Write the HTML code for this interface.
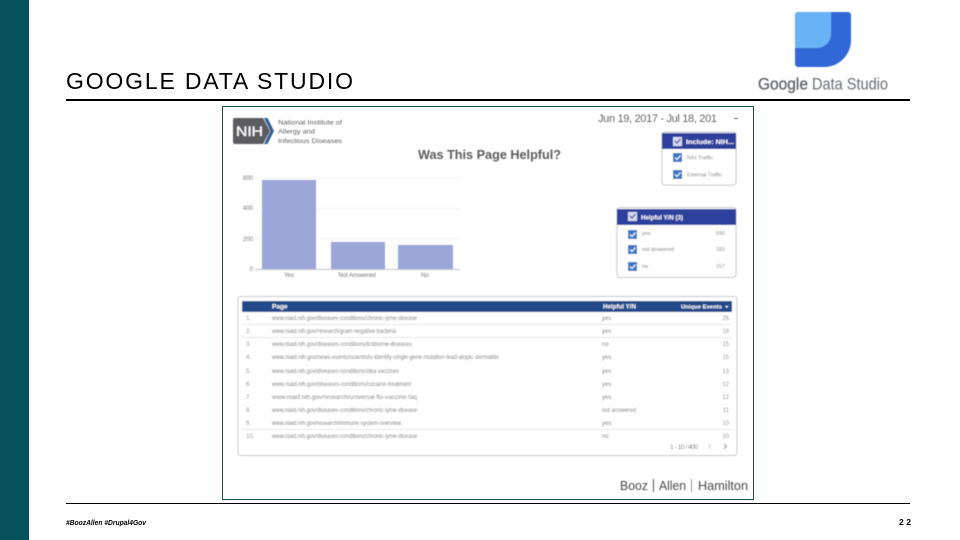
<!DOCTYPE html>
<html lang="en">
<head>
<meta charset="utf-8">
<title>Google Data Studio</title>
<style>
html,body{margin:0;padding:0;background:#fff;width:960px;height:540px;overflow:hidden}
svg{display:block}
text{font-family:"Liberation Sans",sans-serif}
.s{filter:url(#b)}
.r{font-size:6px;fill:#777}
.n{font-size:6px;fill:#888}
.w{fill:#fff;font-weight:bold}
</style>
</head>
<body>
<svg width="960" height="540" viewBox="0 0 960 540" xmlns="http://www.w3.org/2000/svg">
<defs>
<filter id="b" x="-5%" y="-5%" width="110%" height="110%"><feGaussianBlur stdDeviation="0.45"/></filter>
</defs>
<rect x="0" y="0" width="29" height="540" fill="#06525a"/>
<text x="66" y="89" font-size="23" fill="#000" textLength="287" lengthAdjust="spacing">GOOGLE DATA STUDIO</text>
<rect x="66" y="99" width="844" height="2" fill="#000"/>
<rect x="66" y="503" width="844" height="1" fill="#000"/>
<text x="66" y="525" font-size="7.5" font-weight="bold" font-style="italic" fill="#000" textLength="80" lengthAdjust="spacingAndGlyphs">#BoozAllen #Drupal4Gov</text>
<text x="899" y="525" font-size="8.5" font-weight="bold" fill="#000" textLength="12">22</text>

<!-- Data Studio logo -->
<g class="s">
<path d="M798 12H848a3 3 0 0 1 3 3V40a27 27 0 0 1-27 27H798a3 3 0 0 1-3-3V15a3 3 0 0 1 3-3Z" fill="#3367d6"/>
<path d="M798 12H831V34a14 14 0 0 1-14 14H795V15a3 3 0 0 1 3-3Z" fill="#69b2f5"/>
<text x="758" y="89.500" font-size="17" fill="#5f6266" stroke="#5f6266" stroke-width="0.300" textLength="50" lengthAdjust="spacingAndGlyphs">Google</text>
<text x="812" y="89.500" font-size="17" fill="#6a6d71" textLength="76" lengthAdjust="spacingAndGlyphs">Data Studio</text>
</g>

<!-- Screenshot frame -->
<rect x="222.5" y="106.5" width="531" height="393" fill="#fff" stroke="#1f4e5a"/>

<g class="s">
<!-- NIH logo -->
<path d="M235 118H263L270 131L263 144H235a2 2 0 0 1-2-2V120a2 2 0 0 1 2-2Z" fill="#5b5b60"/>
<path d="M264 118h3.500l6.500 13-6.500 13H264l6.500-13Z" fill="#2f5f94"/>
<text x="236" y="136" font-size="14" fill="#fff" stroke="#fff" stroke-width="0.200" textLength="27" lengthAdjust="spacingAndGlyphs">NIH</text>
<text x="278" y="124.500" font-size="6.500" fill="#5c5c5c" textLength="64" lengthAdjust="spacingAndGlyphs">National Institute of</text>
<text x="278" y="133.500" font-size="6.500" fill="#5c5c5c" textLength="37" lengthAdjust="spacingAndGlyphs">Allergy and</text>
<text x="278" y="143" font-size="6.500" fill="#5c5c5c" textLength="64" lengthAdjust="spacingAndGlyphs">Infectious Diseases</text>

<!-- Date -->
<text x="598" y="122" font-size="11" fill="#666" textLength="119" lengthAdjust="spacing">Jun 19, 2017 - Jul 18, 201</text>
<rect x="734" y="118" width="4" height="1" fill="#666"/>

<!-- Title -->
<text x="418" y="159" font-size="13" font-weight="bold" fill="#5a5a5a" textLength="143" lengthAdjust="spacingAndGlyphs">Was This Page Helpful?</text>

<!-- Filter 1 -->
<rect x="662" y="132" width="74" height="53" rx="3" fill="#fff" stroke="#c8c8cc"/>
<rect x="662" y="133" width="74" height="16" fill="#2f3f9e"/>
<rect x="673" y="137" width="9" height="9" fill="#d5d9ee"/>
<path d="M675 141l2 2 3.500-4" fill="none" stroke="#2f3f9e" stroke-width="1.200"/>
<text x="686" y="144" font-size="6" class="w" textLength="48" lengthAdjust="spacingAndGlyphs">Include: NIH...</text>
<rect x="673" y="153" width="9" height="9" fill="#3a74c4"/>
<path d="M675 157.500l2 2 3.500-4" fill="none" stroke="#fff" stroke-width="1"/>
<text x="687" y="159.500" font-size="5.500" fill="#777" textLength="26" lengthAdjust="spacingAndGlyphs">NIH Traffic</text>
<rect x="673" y="170" width="9" height="9" fill="#3a74c4"/>
<path d="M675 174.500l2 2 3.500-4" fill="none" stroke="#fff" stroke-width="1"/>
<text x="687" y="176.500" font-size="5.500" fill="#777" textLength="35" lengthAdjust="spacingAndGlyphs">External Traffic</text>

<!-- Chart -->
<g fill="#f4f4f6">
<rect x="255" y="178" width="205" height="1"/>
<rect x="255" y="208" width="205" height="1"/>
<rect x="255" y="238" width="205" height="1"/>
</g>
<rect x="255" y="269" width="205" height="1" fill="#c4c4c8"/>
<rect x="262" y="180" width="54" height="89" fill="#9ca6d9"/>
<rect x="331" y="242" width="54" height="27" fill="#9ca6d9"/>
<rect x="398" y="245" width="55" height="24" fill="#9ca6d9"/>
<g font-size="6" fill="#777" text-anchor="end">
<text x="253" y="180">600</text>
<text x="253" y="210">400</text>
<text x="253" y="241">200</text>
<text x="253" y="271">0</text>
</g>
<g font-size="6" fill="#777" text-anchor="middle">
<text x="289" y="277">Yes</text>
<text x="357" y="277">Not Answered</text>
<text x="425" y="277">No</text>
</g>

<!-- Filter 2 -->
<rect x="617" y="207.500" width="119" height="70" rx="3" fill="#fff" stroke="#c8c8cc"/>
<rect x="617" y="209" width="119" height="16" fill="#2f3f9e"/>
<rect x="628" y="212" width="9" height="9" fill="#d5d9ee"/>
<path d="M630 216l2 2 3.500-4" fill="none" stroke="#2f3f9e" stroke-width="1.200"/>
<text x="641" y="219.500" font-size="6.500" class="w" textLength="42" lengthAdjust="spacingAndGlyphs">Helpful Y/N (3)</text>
<rect x="628" y="230" width="9" height="9" fill="#3a74c4"/>
<path d="M630 234.500l2 2 3.500-4" fill="none" stroke="#fff" stroke-width="1"/>
<rect x="628" y="245" width="9" height="9" fill="#3a74c4"/>
<path d="M630 249.500l2 2 3.500-4" fill="none" stroke="#fff" stroke-width="1"/>
<rect x="628" y="262" width="9" height="9" fill="#3a74c4"/>
<path d="M630 266.500l2 2 3.500-4" fill="none" stroke="#fff" stroke-width="1"/>
<g font-size="5.500" fill="#777">
<text x="642" y="235">yes</text>
<text x="642" y="251" textLength="32" lengthAdjust="spacingAndGlyphs">not answered</text>
<text x="642" y="268">no</text>
</g>
<g font-size="5.500" fill="#888" text-anchor="end">
<text x="725" y="235">590</text>
<text x="725" y="251">183</text>
<text x="725" y="268">157</text>
</g>

<!-- Table -->
<rect x="238" y="296.500" width="499" height="159" rx="3" fill="#fff" stroke="#c8c8cc"/>
<rect x="242" y="301" width="490" height="11" fill="#234a8a"/>
<text x="272" y="308.500" font-size="6.500" class="w">Page</text>
<text x="603" y="308.500" font-size="6.500" class="w" textLength="33" lengthAdjust="spacingAndGlyphs">Helpful Y/N</text>
<text x="681" y="308.500" font-size="5.500" class="w" textLength="41" lengthAdjust="spacingAndGlyphs">Unique Events</text>
<path d="M725 306h3.500l-1.750 2Z" fill="#fff"/>
<g fill="#e6e6e8">
<rect x="242" y="324" width="490" height="1"/>
<rect x="242" y="337" width="490" height="1"/>
<rect x="242" y="429" width="490" height="1"/>
</g>

<g class="n">
<text x="246" y="320">1.</text>
<text x="246" y="333">2.</text>
<text x="246" y="346">3.</text>
<text x="246" y="359">4.</text>
<text x="246" y="373">5.</text>
<text x="246" y="386">6.</text>
<text x="246" y="399">7.</text>
<text x="246" y="412">8.</text>
<text x="246" y="425">9.</text>
<text x="246" y="438">10.</text>
</g>
<g class="r">
<text x="272" y="320" textLength="145" lengthAdjust="spacingAndGlyphs">www.niaid.nih.gov/diseases-conditions/chronic-lyme-disease</text>
<text x="272" y="333" textLength="124" lengthAdjust="spacingAndGlyphs">www.niaid.nih.gov/research/gram-negative-bacteria</text>
<text x="272" y="346" textLength="140" lengthAdjust="spacingAndGlyphs">www.niaid.nih.gov/diseases-conditions/tickborne-diseases</text>
<text x="272" y="359" textLength="227" lengthAdjust="spacingAndGlyphs">www.niaid.nih.gov/news-events/scientists-identify-single-gene-mutation-lead-atopic-dermatitis</text>
<text x="272" y="373" textLength="127" lengthAdjust="spacingAndGlyphs">www.niaid.nih.gov/diseases-conditions/zika-vaccines</text>
<text x="272" y="386" textLength="139" lengthAdjust="spacingAndGlyphs">www.niaid.nih.gov/diseases-conditions/cocaine-treatment</text>
<text x="272" y="399" textLength="145" lengthAdjust="spacingAndGlyphs">www.niaid.nih.gov/research/universal-flu-vaccine-faq</text>
<text x="272" y="412" textLength="145" lengthAdjust="spacingAndGlyphs">www.niaid.nih.gov/diseases-conditions/chronic-lyme-disease</text>
<text x="272" y="425" textLength="129" lengthAdjust="spacingAndGlyphs">www.niaid.nih.gov/research/immune-system-overview</text>
<text x="272" y="438" textLength="145" lengthAdjust="spacingAndGlyphs">www.niaid.nih.gov/diseases-conditions/chronic-lyme-disease</text>
</g>
<g class="r">
<text x="602" y="320">yes</text>
<text x="602" y="333">yes</text>
<text x="602" y="346">no</text>
<text x="602" y="359">yes</text>
<text x="602" y="373">yes</text>
<text x="602" y="386">yes</text>
<text x="602" y="399">yes</text>
<text x="602" y="412" textLength="34" lengthAdjust="spacingAndGlyphs">not answered</text>
<text x="602" y="425">yes</text>
<text x="602" y="438">no</text>
</g>
<g class="n" text-anchor="end">
<text x="729" y="320">26</text>
<text x="729" y="333">18</text>
<text x="729" y="346">15</text>
<text x="729" y="359">15</text>
<text x="729" y="373">13</text>
<text x="729" y="386">12</text>
<text x="729" y="399">12</text>
<text x="729" y="412">11</text>
<text x="729" y="425">10</text>
<text x="729" y="438">10</text>
</g>
<text x="670" y="449" font-size="6.500" fill="#777" textLength="28" lengthAdjust="spacing">1 - 10 / 400</text>
<path d="M711 444l-2.500 2.500 2.500 2.500" fill="none" stroke="#c4c4c4" stroke-width="0.800"/>
<path d="M724 444l2.500 2.500-2.500 2.500" fill="none" stroke="#666" stroke-width="0.800"/>

<!-- Booz Allen Hamilton -->
<text x="620" y="490" font-size="12.500" fill="#4a4a4a" textLength="28" lengthAdjust="spacingAndGlyphs">Booz</text>
<rect x="653" y="479" width="1" height="13" fill="#555"/>
<text x="659" y="490" font-size="12.500" fill="#4a4a4a" textLength="27" lengthAdjust="spacingAndGlyphs">Allen</text>
<rect x="691" y="479" width="1" height="13" fill="#999"/>
<text x="698" y="490" font-size="12.500" fill="#4a4a4a" textLength="50" lengthAdjust="spacingAndGlyphs">Hamilton</text>
</g>
</svg>
</body>
</html>
